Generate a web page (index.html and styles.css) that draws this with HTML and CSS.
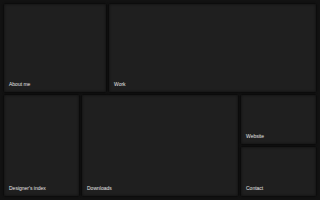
FILE: index.html
```html
<!DOCTYPE html>
<html lang="en">
    <head>
        <meta charset="utf-8" />
        <title>Portfolio</title>
        <link rel="stylesheet" href="styles.css">
    </head>
    <body>
        <div class="grid">
            <div class="row top">
                <a class="tile about" href="#"><span>About me</span></a>
                <a class="tile work" href="#"><span>Work</span></a>
            </div>
            <div class="row bottom">
                <a class="tile index" href="#"><span>Designer's index</span></a>
                <a class="tile downloads" href="#"><span>Downloads</span></a>
                <div class="stack">
                    <a class="tile" href="#"><span>Website</span></a>
                    <a class="tile" href="#"><span>Contact</span></a>
                </div>
            </div>
        </div>
    </body>
</html>
```
FILE: styles.css
```css
html, body {
    margin: 0;
    height: 100%;
    background-color: #121212;
    overflow: hidden;
}
.grid {
    box-sizing: border-box;
    height: 100%;
    padding: 4px 4px 4px 4px;
    display: flex;
    flex-direction: column;
    gap: 3px;
}
.row {
    display: flex;
    gap: 3px;
}
.top {
    height: 88px;
}
.bottom {
    flex: 1;
}
.tile {
    display: flex;
    align-items: flex-end;
    padding: 0 5px 5px 5px;
    background-color: #1f1f1f;
    box-shadow: inset 0 0 3px rgba(0, 0, 0, 0.6), 0 0 2px #000;
    color: #e6e6e6;
    text-decoration: none;
    font-family: "Liberation Sans", Arial, sans-serif;
    font-size: 5px;
    line-height: 6px;
}
.about {
    width: 92px;
}
.work {
    flex: 1;
}
.index {
    width: 65px;
}
.downloads {
    flex: 1;
}
.stack {
    width: 75px;
    display: flex;
    flex-direction: column;
    gap: 3px;
}
.stack .tile {
    flex: 1;
}
```
